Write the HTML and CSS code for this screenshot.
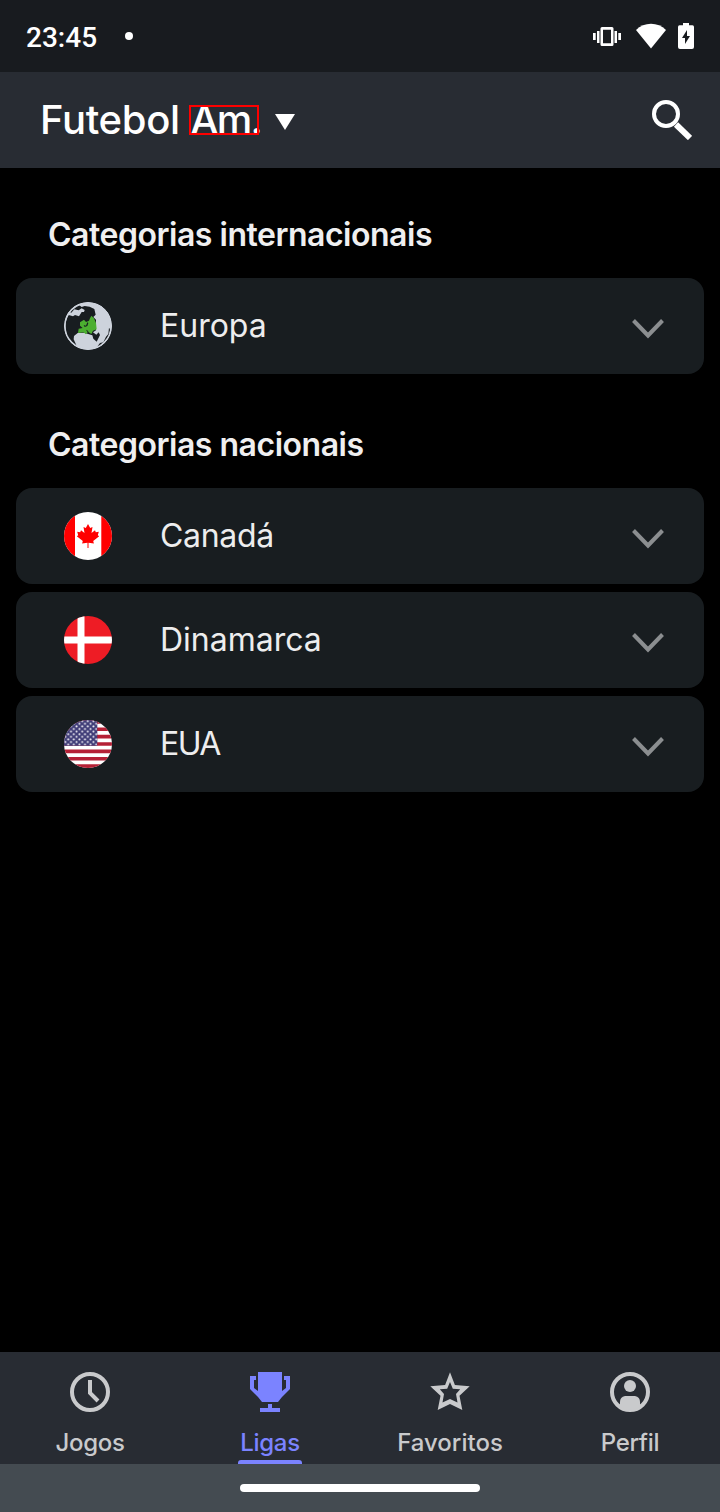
FILE: index.html
```html
<!DOCTYPE html>
<html lang="pt">
<head>
<meta charset="utf-8">
<title>Ligas</title>
<link rel="stylesheet" href="styles.css">
</head>
<body>
<div class="screen">
  <div class="status">
    <span class="time">23:45</span><span class="dot"></span>
    <svg class="vibrate" width="28" height="22" viewBox="0 0 28 22" fill="#fff"><path fill-rule="evenodd" d="M9 1h10q1.500 0 1.500 1.500v16q0 1.500-1.500 1.500H9q-1.500 0-1.500-1.500v-16Q7.500 1 9 1zm1 2.700v13.600h8V3.700zM0 7h2.700v7H0zM4 5h2.500v12H4zM21.500 5H24v12h-2.500zM25.300 7H28v7h-2.700z"/></svg>
    <svg class="wifi" width="30" height="26" viewBox="0 0 30 26" fill="#fff"><path d="M0 7C8-1.500 22-1.500 30 7L15 25.500z"/></svg>
    <svg class="battery" width="16" height="26" viewBox="0 0 16 26"><path fill="#fff" d="M5 0h6v2.300h3.500Q16 2.300 16 4v20q0 2-2 2H2q-2 0-2-2V4q0-1.700 1.500-1.700H5z"/><path fill="#181b1f" d="M9 7v6h3L7 21v-6H4z"/></svg>
  </div>
  <header class="header">
    <h1 class="title">Futebol <span class="marked">Am.</span></h1>
    <svg class="caret" width="20" height="16" viewBox="0 0 20 16"><path fill="#fff" d="M0 0h20L10 16z"/></svg>
    <svg class="search" width="40" height="40" viewBox="0 0 40 40" fill="none" stroke="#fff"><circle cx="14" cy="14" r="12" stroke-width="4"/><path d="M24 24.500L38 38" stroke-width="6"/></svg>
  </header>
  <main class="content">
    <h2 class="heading intl">Categorias internacionais</h2>
    <div class="card">
      <svg class="flag" viewBox="72 66 144 144"><circle cx="144" cy="138" r="72" fill="#cdd3dc"/><path fill="#181d20" d="M107 78L118 76L125 81L134 78L149 80L163 87L167 104L160 111L168 119V151L159 157L169 164L176 157L180 165L170 185L160 176L157 166L132 158L113 159L102 168L101 178L110 198C86 187 76 165 76 138Q77 117 86 105L99 109L105 105L117 109L125 96L132 96L134 90L125 85L116 91L103 88L94 98L89 96Q97 84 107 78zM207 143Q212 148 209 160Q202 181 182 197L171 201L180 189L190 187L198 170L205 162z"/><path fill="#4caf30" d="M114 159L116 146L128 144L120 137L120 127L132 119L138 126L147 122L150 115L154 107L162 115L168 129L170 148L159 152L154 162L144 155L138 163L130 157z"/><path fill="#181d20" d="M131 135L138 137L142 127L145 129L142 138L134 141zM138 149L146 154L142 156z"/><circle cx="144" cy="138" r="69.500" fill="none" stroke="#cdd3dc" stroke-width="5"/></svg>
      <span class="name europe">Europa</span>
      <svg class="chevron" viewBox="0 0 32 20"><path d="M1.500 1.500L16 16.500L30.500 1.500"/></svg>
    </div>
    <h2 class="heading national">Categorias nacionais</h2>
    <div class="card">
      <svg class="flag" viewBox="0 0 48 48"><path fill="#fff" d="M0 0h48v48H0z"/><path fill="#f00" d="M0 0h11v48H0zM37.300 0H48v48H37.300zM24 12l2.200 4 2.300-1-1 6 3.500-2.800.8 2 3-.4-1 3.400 1.400 1-6 4.800.7 2.500-5.400-.7V36h-1v-5.200l-5.400.7.700-2.500-6-4.800 1.400-1-1-3.400 3 .4.800-2 3.500 2.800-1-6 2.300 1z"/></svg>
      <span class="name canada">Canadá</span>
      <svg class="chevron" viewBox="0 0 32 20"><path d="M1.500 1.500L16 16.500L30.500 1.500"/></svg>
    </div>
    <div class="card">
      <svg class="flag" viewBox="0 0 48 48"><path fill="#ee1c25" d="M0 0h48v48H0z"/><path fill="#fff" d="M13.500 0h7v20.500H48v7H20.500V48h-7V27.500H0v-7h13.500z"/></svg>
      <span class="name denmark">Dinamarca</span>
      <svg class="chevron" viewBox="0 0 32 20"><path d="M1.500 1.500L16 16.500L30.500 1.500"/></svg>
    </div>
    <div class="card">
      <svg class="flag" viewBox="0 0 48 48"><defs><pattern id="stars" width="5.600" height="5.200" patternUnits="userSpaceOnUse"><circle cx="1.400" cy="1.200" r="1" fill="#f0eff5"/><circle cx="4.200" cy="3.800" r="1" fill="#f0eff5"/></pattern></defs><path fill="#fff" d="M0 0h48v48H0z"/><path stroke="#b52036" stroke-width="3.690" d="M0 1.850h48M0 9.230h48M0 16.620h48M0 24h48M0 31.380h48M0 38.770h48M0 46.150h48"/><path fill="#413e78" d="M0 0h33.300v25.800H0z"/><path fill="url(#stars)" d="M0 0h33v25.500H0z"/></svg>
      <span class="name usa">EUA</span>
      <svg class="chevron" viewBox="0 0 32 20"><path d="M1.500 1.500L16 16.500L30.500 1.500"/></svg>
    </div>
  </main>
  <nav class="tabs">
    <div class="tab"><svg class="icon" viewBox="0 0 40 40" fill="none" stroke="currentColor" stroke-width="4"><circle cx="20" cy="20" r="18"/><path d="M20 8v13l8 8"/></svg><span class="label games">Jogos</span></div>
    <div class="tab active"><svg class="icon" viewBox="0 0 40 40" fill="currentColor"><path d="M8 0h24v19l4-3V8h-2V4h6v13l-8 8-4 5H12l-4-5-8-8V4h6v4H4v8l4 3zM18 32h4v4h8v4H10v-4h8z"/></svg><span class="label leagues">Ligas</span></div>
    <div class="tab"><svg class="icon" viewBox="0 0 40 40" fill="currentColor"><path fill-rule="evenodd" d="M20 .3L24.900 13L39.700 14.300L29.500 23.700L32.300 38L20 32L7.700 38L10.500 23.700L.3 14.300L15.100 13zM20 10L17.200 16.700L9.800 17.300L14 22L12.500 30.500L20 26.900L27.500 30.500L26 22L30.200 17.300L22.800 16.700z"/></svg><span class="label favorites">Favoritos</span></div>
    <div class="tab"><svg class="icon" viewBox="0 0 40 40" fill="currentColor"><circle cx="20" cy="20" r="18" fill="none" stroke="currentColor" stroke-width="4"/><circle cx="20" cy="14" r="6"/><path d="M15 24h10q5 1 5 6v5q-10 6-20 0v-5q0-5 5-6z"/></svg><span class="label profile">Perfil</span></div>
  </nav>
  <div class="gesture"><span class="handle"></span></div>
</div>
</body>
</html>
```
FILE: styles.css
```css
*, *::after { box-sizing: border-box; }
body { margin: 0; background: #000; font-family: Inter, Roboto, sans-serif; }
.screen { width: 720px; height: 1512px; display: flex; flex-direction: column; }
.status { height: 72px; padding: 0 26px; display: flex; align-items: center; background: #181b1f; color: #fff; }
.time { width: 99px; padding-top: 3px; font: 500 28px/34px Roboto, sans-serif; }
.dot { width: 8px; height: 8px; border-radius: 50%; background: #fff; }
.vibrate { margin: 1px 0 0 auto; }
.wifi { margin: 0 12px 0 15px; }
.header { height: 96px; padding: 0 28px 0 40px; display: flex; align-items: center; background: #282c33; color: #fff; }
.title { margin: 0; width: 235px; font-size: 40px; line-height: 48px; font-weight: 500; letter-spacing: -0.3px; white-space: nowrap; }
.marked { position: relative; letter-spacing: -1.8px; }
.marked::after { content: ""; position: absolute; left: -1px; top: 10px; width: 70px; height: 30px; border: 2px solid #f00; }
.caret { margin-top: 4px; }
.search { margin-left: auto; }
.content { flex: 1; padding: 47px 16px 0; display: flex; flex-direction: column; gap: 8px; }
.heading { margin: 0; padding: 0 32px; height: 40px; font-size: 32px; line-height: 40px; font-weight: 600; letter-spacing: -0.48px; color: #efeff0; white-space: nowrap; }
.intl { margin-bottom: 15px; }
.national { margin-top: 43px; margin-bottom: 15px; }
.card { height: 96px; padding: 0 40px 0 48px; display: flex; align-items: center; border-radius: 16px; background: #181d20; }
.flag { width: 48px; height: 48px; border-radius: 50%; }
.name { margin-left: 48px; font-size: 32px; line-height: 40px; color: #ededee; }
.canada { letter-spacing: -0.3px; }
.usa { letter-spacing: -1.6px; }
.chevron { width: 32px; height: 20px; margin: 5px 0 0 auto; fill: none; stroke: #8b8e90; stroke-width: 4; }
.tabs { height: 112px; display: flex; background: #282c33; color: #c9cacc; }
.tab { flex: 1; padding-top: 20px; display: flex; flex-direction: column; align-items: center; }
.icon { width: 40px; height: 40px; }
.label { margin-top: 16px; font-size: 24px; line-height: 30px; font-weight: 500; }
.games, .leagues, .profile { letter-spacing: -0.3px; }
.active { color: #7b83ff; }
.active::after { content: ""; width: 64px; height: 4px; margin-top: 2px; border-radius: 3px 3px 0 0; background: currentColor; }
.gesture { height: 48px; display: flex; align-items: center; justify-content: center; background: #444b51; }
.handle { width: 240px; height: 8px; border-radius: 4px; background: #fff; }
```
